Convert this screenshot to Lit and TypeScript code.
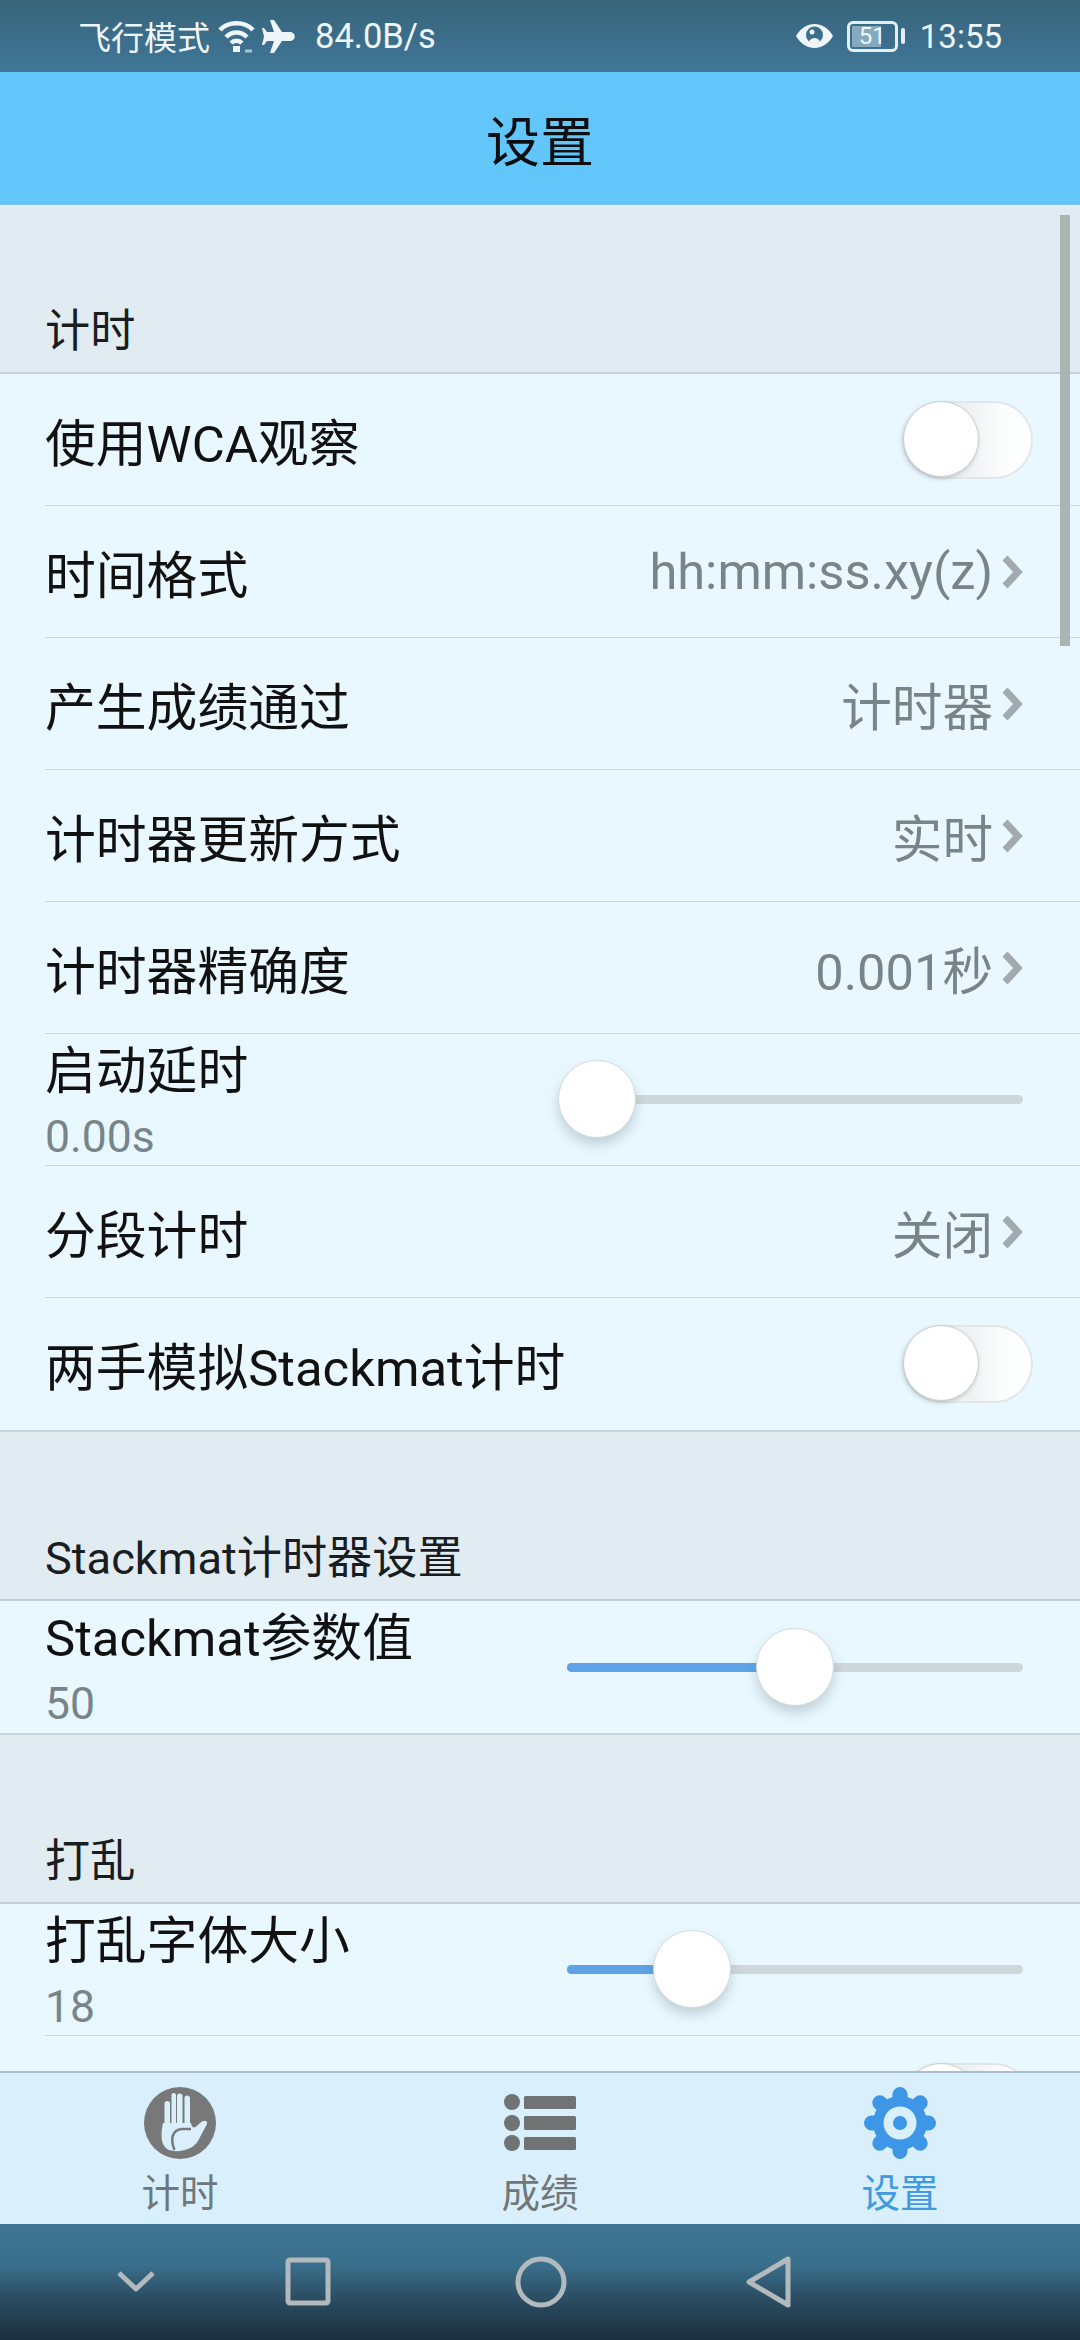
import { LitElement, html, css, nothing } from "lit";
import { customElement } from "lit/decorators.js";

type Row =
  | { kind: "switch"; label: string }
  | { kind: "link"; label: string; value: string }
  | { kind: "slider"; label: string; value: string; thumb: number };

const chevron = html`<svg class="chev" viewBox="0 0 21 34">
  <path d="M3 3 L16 17 L3 31" fill="none" stroke="#a1abaf" stroke-width="7" />
</svg>`;

@customElement("app-root")
export class AppRoot extends LitElement {
  sections: { title: string; rows: Row[] }[] = [
    {
      title: "计时",
      rows: [
        { kind: "switch", label: "使用WCA观察" },
        { kind: "link", label: "时间格式", value: "hh:mm:ss.xy(z)" },
        { kind: "link", label: "产生成绩通过", value: "计时器" },
        { kind: "link", label: "计时器更新方式", value: "实时" },
        { kind: "link", label: "计时器精确度", value: "0.001秒" },
        { kind: "slider", label: "启动延时", value: "0.00s", thumb: 30 },
        { kind: "link", label: "分段计时", value: "关闭" },
        { kind: "switch", label: "两手模拟Stackmat计时" },
      ],
    },
    {
      title: "Stackmat计时器设置",
      rows: [{ kind: "slider", label: "Stackmat参数值", value: "50", thumb: 228 }],
    },
    {
      title: "打乱",
      rows: [
        { kind: "slider", label: "打乱字体大小", value: "18", thumb: 125 },
        { kind: "switch", label: "" },
      ],
    },
  ];

  static styles = css`
    :host {
      display: flex;
      flex-direction: column;
      width: 1080px;
      height: 2340px;
      overflow: hidden;
      font-family: Roboto, "Noto Sans CJK SC", sans-serif;
      color: #111;
    }
    .status {
      flex: none;
      height: 72px;
      display: flex;
      align-items: center;
      padding: 0 78px 0 78px;
      box-sizing: border-box;
      background: linear-gradient(#38647b, #3f7697);
      color: #eef6fa;
      font-size: 33px;
    }
    .status .speed {
      margin-left: 20px;
      font-size: 34.5px;
    }
    .status .wifi {
      width: 37px;
      height: 33px;
      margin-left: 8px;
    }
    .status .plane {
      width: 33px;
      height: 33px;
      margin-left: 7px;
    }
    .status .eye {
      width: 37px;
      height: 24px;
      margin-left: auto;
    }
    .battery {
      position: relative;
      width: 51px;
      height: 31px;
      margin-left: 14px;
      box-sizing: border-box;
      border: 3px solid #e4eff4;
      border-radius: 6px;
      font-size: 24px;
      line-height: 25px;
      text-align: center;
    }
    .battery .level {
      position: absolute;
      inset: 2px 14px 2px 2px;
      background: #86a9bf;
    }
    .battery span {
      position: relative;
    }
    .nub {
      width: 4px;
      height: 16px;
      margin-left: 3px;
      background: #e4eff4;
      border-radius: 2px;
    }
    .clock {
      margin-left: 15px;
      font-size: 33px;
    }
    .header {
      flex: none;
      height: 133px;
      display: flex;
      align-items: center;
      justify-content: center;
      background: #62c6fb;
      border-bottom: 1px solid #7cc4e8;
      box-sizing: border-box;
      font-size: 54px;
      color: #0b0f12;
    }
    .list {
      flex: 1;
      min-height: 0;
      position: relative;
      overflow: hidden;
      background: #e1ecf2;
    }
    .scrollbar {
      position: absolute;
      top: 10px;
      right: 10px;
      width: 10px;
      height: 431px;
      background: #a9b5b2;
    }
    .title {
      height: 169px;
      box-sizing: border-box;
      display: flex;
      align-items: flex-end;
      padding: 0 0 12px 45px;
      font-size: 45.2px;
      line-height: 56px;
      color: #1a1d1f;
      border-bottom: 2px solid #c2d0d7;
    }
    .rows {
      background: #e9f8ff;
      border-bottom: 2px solid #c8d5da;
    }
    .row {
      height: 132px;
      box-sizing: border-box;
      display: flex;
      align-items: center;
      margin-left: 45px;
      padding-right: 57px;
      border-bottom: 1px solid #cbd8dc;
      font-size: 50.8px;
    }
    .row:last-child {
      border-bottom: none;
    }
    .value {
      margin-left: auto;
      color: #778489;
      font-size: 50.6px;
    }
    .chev {
      flex: none;
      width: 21px;
      height: 34px;
      margin-left: 9px;
    }
    .stack {
      display: flex;
      flex-direction: column;
      padding-top: 6px;
      line-height: 62px;
    }
    .sub {
      margin-top: 6px;
      color: #778489;
      font-size: 44.5px;
      line-height: 56px;
    }
    .slider {
      position: relative;
      width: 456px;
      height: 9px;
      margin-left: auto;
      border-radius: 5px;
      background: #ced7d9;
    }
    .slider .fill {
      position: absolute;
      left: 0;
      top: 0;
      bottom: 0;
      border-radius: 5px;
      background: #5ea3e6;
    }
    .slider .thumb {
      position: absolute;
      top: -35px;
      width: 78px;
      height: 78px;
      margin-left: -39px;
      border-radius: 50%;
      box-sizing: border-box;
      background: #fff;
      border: 1px solid #d5dcde;
      box-shadow: 0 7px 12px rgba(90, 110, 120, 0.28);
    }
    .switch {
      position: relative;
      width: 130px;
      height: 78px;
      margin-left: auto;
      margin-right: -10px;
      box-sizing: border-box;
      border: 2px solid #e0e7e9;
      border-radius: 39px;
      background: linear-gradient(90deg, #eef1f2 50%, #fbfcfc 75%, #fff);
    }
    .switch::after {
      content: "";
      position: absolute;
      left: -2px;
      top: -2px;
      width: 76px;
      height: 76px;
      border-radius: 50%;
      box-sizing: border-box;
      background: #fff;
      border: 1px solid #c9cfd0;
      box-shadow: -1px 2px 4px rgba(90, 100, 105, 0.3);
    }
    .tabs {
      flex: none;
      height: 153px;
      box-sizing: border-box;
      display: flex;
      background: #d9effb;
      border-top: 2px solid #a9c0cc;
    }
    .tab {
      flex: 1;
      display: flex;
      flex-direction: column;
      align-items: center;
      padding-top: 14px;
      color: #70777a;
      font-size: 38.5px;
      line-height: 48px;
    }
    .tab svg {
      width: 72px;
      height: 72px;
      margin-bottom: 11px;
    }
    .tab.active {
      color: #3f9ae0;
    }
    .nav {
      flex: none;
      height: 116px;
      display: flex;
      align-items: center;
      padding-left: 109px;
      background: linear-gradient(#3f7593, #3a6f8c 35%, #2c4f65 62%, #1a2f3d);
    }
    .nav svg {
      flex: none;
      width: 54px;
      height: 54px;
      fill: none;
      stroke: #b2babd;
      stroke-width: 5;
      stroke-linejoin: round;
    }
    .nav svg + svg {
      margin-left: 118px;
    }
    .nav svg + svg + svg {
      margin-left: 179px;
    }
    .nav svg + svg + svg + svg {
      margin-left: 173px;
    }
  `;

  renderRow(row: Row) {
    if (row.kind === "switch") {
      return html`<div class="row">
        <span>${row.label || nothing}</span>
        <div class="switch"></div>
      </div>`;
    }
    if (row.kind === "link") {
      return html`<div class="row">
        <span>${row.label}</span>
        <span class="value">${row.value}</span>
        ${chevron}
      </div>`;
    }
    return html`<div class="row">
      <div class="stack">
        <span>${row.label}</span>
        <span class="sub">${row.value}</span>
      </div>
      <div class="slider">
        <div class="fill" style="width:${row.thumb}px"></div>
        <div class="thumb" style="left:${row.thumb}px"></div>
      </div>
    </div>`;
  }

  render() {
    return html`
      <div class="status">
        <span>飞行模式</span>
        <svg class="wifi" viewBox="0 0 37 33" fill="none" stroke="#eef6fa" stroke-width="4.5">
          <path d="M2 10 C10 1 27 1 35 10" />
          <path d="M8 17 C14 11 23 11 29 17" />
          <path d="M13 23 C16 20 21 20 24 23" />
          <rect x="15" y="26" width="7" height="6" fill="#eef6fa" stroke="none" />
          <path d="M27 31 H34" stroke="#a9c3d2" stroke-width="3" />
        </svg>
        <svg class="plane" viewBox="0 0 33 33">
          <path
            fill="#eef6fa"
            d="M8 0 L12 0 L20 12 L29 12 C34 13 34 20 29 21 L20 21 L12 33 L8 33 L12 21 L5 21 L2 25 L0 25 L2 16.5 L0 8 L2 8 L5 12 L12 12 Z"
          />
        </svg>
        <span class="speed">84.0B/s</span>
        <svg class="eye" viewBox="0 0 37 24">
          <path fill="#eef6fa" d="M0 12 C9 -4 28 -4 37 12 C28 28 9 28 0 12 Z" />
          <circle cx="18.5" cy="11" r="8.5" fill="#3b6f8d" />
          <path fill="#eef6fa" d="M13 17 C16 13 21 13 24 17 C22 21 15 21 13 17 Z" />
          <circle cx="16" cy="8" r="2.5" fill="#eef6fa" />
        </svg>
        <div class="battery"><div class="level"></div><span>51</span></div>
        <div class="nub"></div>
        <span class="clock">13:55</span>
      </div>
      <div class="header">设置</div>
      <div class="list">
        ${this.sections.map(
          (s) => html`<div class="section">
            <div class="title">${s.title}</div>
            <div class="rows">${s.rows.map((r) => this.renderRow(r))}</div>
          </div>`
        )}
        <div class="scrollbar"></div>
      </div>
      <div class="tabs">
        <div class="tab">
          <svg viewBox="0 0 72 72">
            <circle cx="36" cy="36" r="36" fill="#787878" />
            <g fill="#d9effb">
              <rect x="20.5" y="14" width="5.5" height="24" rx="2.7" />
              <rect x="27.5" y="6" width="4.5" height="32" rx="2.2" />
              <rect x="33" y="6.5" width="5.5" height="32" rx="2.7" />
              <rect x="40.5" y="8.5" width="5.5" height="30" rx="2.7" />
              <path d="M19 36 L47 36 C48 41 50 42 54 38 C58 33 64 32 63 37 L54 54 C47 65 30 66 23 62 C16 57 17 45 19 36 Z" />
            </g>
            <path d="M30.5 63 C26 52 28 43 38 42 L47 42" fill="none" stroke="#787878" stroke-width="2.5" />
          </svg>
          计时
        </div>
        <div class="tab">
          <svg viewBox="0 0 72 72" fill="#6f7374">
            <circle cx="8" cy="15" r="8" />
            <circle cx="8" cy="36" r="8" />
            <circle cx="8" cy="56" r="8" />
            <rect x="20" y="9" width="52" height="13" rx="1.5" />
            <rect x="20" y="29" width="52" height="14" rx="1.5" />
            <rect x="20" y="50" width="52" height="13" rx="1.5" />
          </svg>
          成绩
        </div>
        <div class="tab active">
          <svg viewBox="0 0 72 72">
            <g stroke="#3d97e6" stroke-width="15" stroke-linecap="round">
              <path d="M36 7.5 V64.5 M7.5 36 H64.5 M15.8 15.8 L56.2 56.2 M56.2 15.8 L15.8 56.2" />
            </g>
            <circle cx="36" cy="36" r="27" fill="#3d97e6" />
            <circle cx="36" cy="36" r="16.5" fill="#d9effb" />
            <circle cx="36" cy="36" r="7" fill="#3d97e6" />
          </svg>
          设置
        </div>
      </div>
      <div class="nav">
        <svg viewBox="0 0 54 54"><path d="M10 18 L27 34 L44 18" /></svg>
        <svg viewBox="0 0 54 54"><rect x="7" y="5" width="40" height="43" rx="2" /></svg>
        <svg viewBox="0 0 54 54"><circle cx="27" cy="27" r="23" /></svg>
        <svg viewBox="0 0 54 54"><path d="M47 4 V50 L8 27 Z" /></svg>
      </div>
    `;
  }
}
